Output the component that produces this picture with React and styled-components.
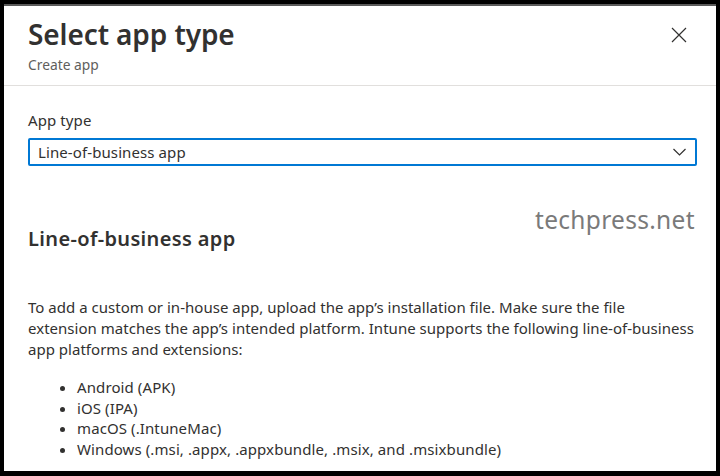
import React from "react";
import styled, { createGlobalStyle } from "styled-components";

const GlobalStyle = createGlobalStyle`
  html, body {
    margin: 0;
    padding: 0;
    background: #000;
  }
  body {
    font-family: "Noto Sans", "Open Sans", sans-serif;
    color: #323130;
  }
`;

const Frame = styled.div`
  width: 720px;
  height: 476px;
  box-sizing: border-box;
  padding: 4px 4px 5px 4px;
  background: #000;
`;

const Panel = styled.div`
  position: relative;
  height: 100%;
  box-sizing: border-box;
  background: #fff;
  border-top: 2px solid #5a5a5a;
  display: flex;
  flex-direction: column;
  overflow: hidden;
`;

const Header = styled.header`
  height: 79px;
  flex: none;
  display: flex;
  justify-content: space-between;
  padding: 0 24px;
  border-bottom: 1px solid #e1dfdd;
`;

const TitleBlock = styled.div`
  padding-top: 10px;
`;

const Title = styled.h1`
  margin: 0;
  font-size: 28px;
  line-height: 36px;
  font-weight: 600;
  letter-spacing: -0.1px;
  color: #323130;
`;

const Subtitle = styled.div`
  margin-top: 4px;
  font-size: 13.8px;
  line-height: 18px;
  color: #605e5c;
`;

const CloseButton = styled.button`
  margin-top: 15px;
  margin-right: 0;
  width: 27px;
  height: 27px;
  padding: 0;
  border: none;
  background: transparent;
  display: flex;
  align-items: center;
  justify-content: center;
  color: #323130;
`;

const Body = styled.main`
  padding: 24px 19px 0 24px;
  font-size: 15px;
  letter-spacing: 0.1px;
`;

const Label = styled.label`
  display: block;
  line-height: 20px;
`;

const Select = styled.div`
  margin-top: 8px;
  height: 28px;
  box-sizing: border-box;
  border: 2px solid #0078d4;
  border-radius: 2px;
  display: flex;
  align-items: center;
  justify-content: space-between;
  padding: 0 9px 0 8px;
`;

const Heading = styled.h2`
  margin: 59px 0 0;
  font-size: 20px;
  line-height: 28px;
  font-weight: 600;
  letter-spacing: 0.35px;
`;

const Paragraph = styled.p`
  margin: 44px 1px 0 0;
  line-height: 21px;
  letter-spacing: 0.02px;
`;

const List = styled.ul`
  margin: 17px 0 0;
  padding-left: 49px;
  line-height: 20.5px;
`;

const Watermark = styled.div`
  position: absolute;
  left: 531px;
  top: 197px;
  font-size: 24.5px;
  color: #7a7a7a;
  letter-spacing: 0.3px;
`;

const CloseIcon = () => (
  <svg width="16" height="16" viewBox="0 0 16 16">
    <path d="M1 1 L15 15 M15 1 L1 15" stroke="#323130" strokeWidth="1.2" />
  </svg>
);

const Chevron = () => (
  <svg width="13" height="8" viewBox="0 0 13 8">
    <path d="M0.5 1 L6.5 7 L12.5 1" fill="none" stroke="#323130" strokeWidth="1.2" />
  </svg>
);

const platforms = [
  "Android (APK)",
  "iOS (IPA)",
  "macOS (.IntuneMac)",
  "Windows (.msi, .appx, .appxbundle, .msix, and .msixbundle)",
];

export default function App() {
  return (
    <>
      <GlobalStyle />
      <Frame>
        <Panel>
          <Header>
            <TitleBlock>
              <Title>Select app type</Title>
              <Subtitle>Create app</Subtitle>
            </TitleBlock>
            <CloseButton aria-label="Close">
              <CloseIcon />
            </CloseButton>
          </Header>
          <Body>
            <Label>App type</Label>
            <Select>
              <span>Line-of-business app</span>
              <Chevron />
            </Select>
            <Heading>Line-of-business app</Heading>
            <Paragraph>
              To add a custom or in-house app, upload the app’s installation
              file. Make sure the file extension matches the app’s intended
              platform. Intune supports the following line-of-business app
              platforms and extensions:
            </Paragraph>
            <List>
              {platforms.map((p) => (
                <li key={p}>{p}</li>
              ))}
            </List>
          </Body>
          <Watermark>techpress.net</Watermark>
        </Panel>
      </Frame>
    </>
  );
}
